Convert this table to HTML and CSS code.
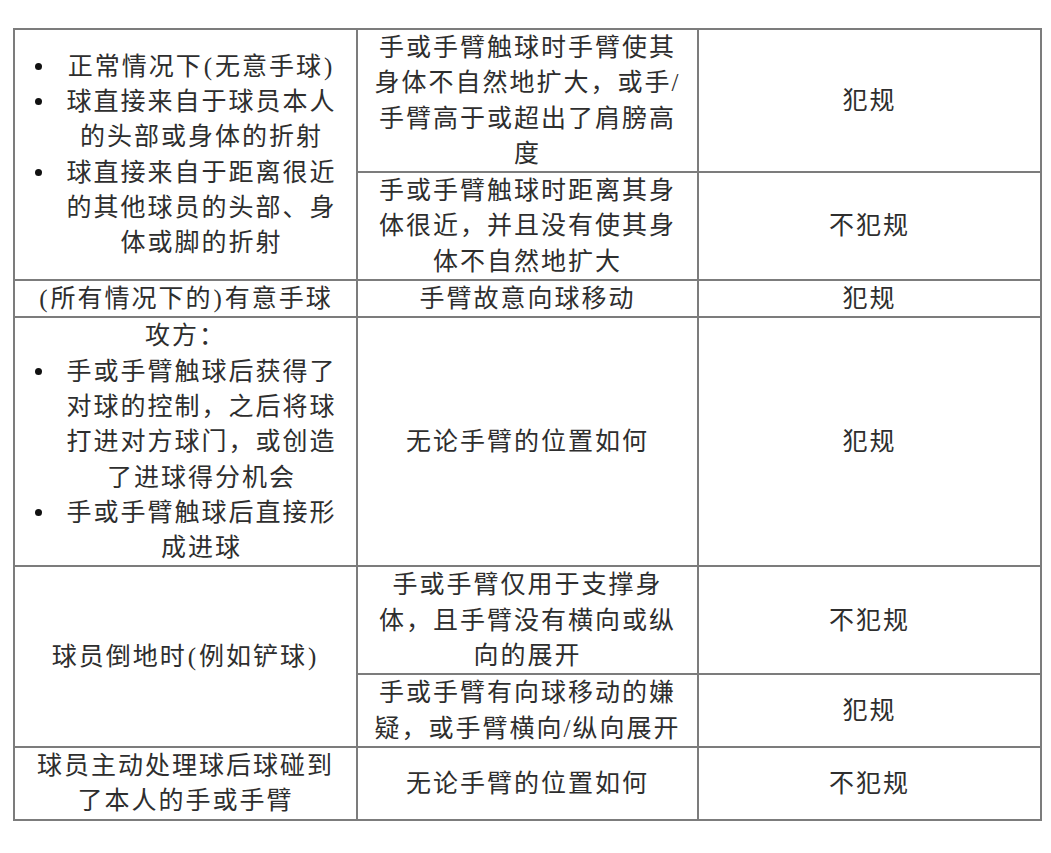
FILE: index.html
```html
<!DOCTYPE html>
<html lang="zh-CN">
<head>
<meta charset="utf-8">
<title>手球判罚</title>
<link rel="stylesheet" href="styles.css">
</head>
<body>
<table class="rules">
  <colgroup>
    <col class="c1">
    <col class="c2">
    <col class="c3">
  </colgroup>
  <tbody>
    <tr>
      <td rowspan="2" class="situation">
        <ul class="bullets">
          <li><span class="dot"><i></i></span><span class="txt">正常情况下<span class="par">(</span>无意手球<span class="par">)</span></span></li>
          <li><span class="dot"><i></i></span><span class="txt">球直接来自于球员本人<br>的头部或身体的折射</span></li>
          <li><span class="dot"><i></i></span><span class="txt">球直接来自于距离很近<br>的其他球员的头部、身<br>体或脚的折射</span></li>
        </ul>
      </td>
      <td class="cond">手或手臂触球时手臂使其<br>身体不自然地扩大，或手/<br>手臂高于或超出了肩膀高<br>度</td>
      <td class="verdict">犯规</td>
    </tr>
    <tr>
      <td class="cond">手或手臂触球时距离其身<br>体很近，并且没有使其身<br>体不自然地扩大</td>
      <td class="verdict">不犯规</td>
    </tr>
    <tr>
      <td class="situation"><span class="par">(</span>所有情况下的<span class="par">)</span>有意手球</td>
      <td class="cond">手臂故意向球移动</td>
      <td class="verdict">犯规</td>
    </tr>
    <tr>
      <td class="situation">
        <div class="head">攻方：</div>
        <ul class="bullets">
          <li><span class="dot"><i></i></span><span class="txt">手或手臂触球后获得了<br>对球的控制，之后将球<br>打进对方球门，或创造<br>了进球得分机会</span></li>
          <li><span class="dot"><i></i></span><span class="txt">手或手臂触球后直接形<br>成进球</span></li>
        </ul>
      </td>
      <td class="cond">无论手臂的位置如何</td>
      <td class="verdict">犯规</td>
    </tr>
    <tr>
      <td rowspan="2" class="situation">球员倒地时<span class="par">(</span>例如铲球<span class="par">)</span></td>
      <td class="cond">手或手臂仅用于支撑身<br>体，且手臂没有横向或纵<br>向的展开</td>
      <td class="verdict">不犯规</td>
    </tr>
    <tr>
      <td class="cond">手或手臂有向球移动的嫌<br>疑，或手臂横向/纵向展开</td>
      <td class="verdict">犯规</td>
    </tr>
    <tr>
      <td class="situation">球员主动处理球后球碰到<br>了本人的手或手臂</td>
      <td class="cond">无论手臂的位置如何</td>
      <td class="verdict">不犯规</td>
    </tr>
  </tbody>
</table>
</body>
</html>
```

FILE: styles.css
```css
html, body {
  margin: 0;
  padding: 0;
  background: #ffffff;
}

body {
  font-family: "Liberation Serif", "Noto Sans CJK SC", serif;
  font-size: 25px;
  letter-spacing: 2px;
  line-height: 35.3px;
  color: #2e2e2e;
}

.rules {
  margin: 28px 0 0 13px;
  width: 1027px;
  border-collapse: collapse;
  table-layout: fixed;
}

.c1 { width: 343px; }
.c2 { width: 341px; }
.c3 { width: 343px; }

.rules td {
  border: 2px solid #7c7c7c;
  padding: 0 6px;
  text-align: center;
  vertical-align: middle;
  white-space: nowrap;
}

.par {
  margin: 0 1px;
}

.bullets {
  list-style: none;
  margin: 0;
  padding: 0;
}

.bullets li {
  display: flex;
  align-items: flex-start;
}

.dot {
  flex: 0 0 34px;
  height: 35.3px;
  display: flex;
  align-items: center;
  justify-content: center;
}

.dot i {
  display: block;
  width: 7px;
  height: 7px;
  border-radius: 50%;
  background: #111111;
}

.txt {
  flex: 1;
  text-align: center;
  padding-right: 2px;
}

.head {
  text-align: center;
}
```
